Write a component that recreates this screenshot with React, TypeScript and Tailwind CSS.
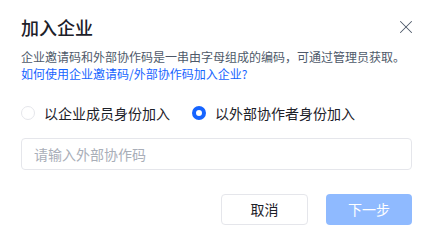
import { X } from 'lucide-react';

function Radio({ checked, label }: { checked?: boolean; label: string }) {
    return (
        <label className="flex items-center gap-[9px] cursor-pointer">
            {checked ? (
                <span className="w-[14px] h-[14px] rounded-full border-[4px] border-[#1664ff] bg-white" />
            ) : (
                <span className="w-[14px] h-[14px] rounded-full border border-[#e5e6eb] bg-white" />
            )}
            <span className="text-[14px] leading-[22px] text-[#1d2129]">{label}</span>
        </label>
    );
}

export default function App() {
    return (
        <div
            className="w-[437px] h-[237px] bg-white pl-[21px] pr-[25px] pt-[14px]"
            style={{ fontFamily: '"Noto Sans CJK SC", "Noto Sans", sans-serif' }}
        >
            <div className="flex items-center justify-between h-[26px]">
                <h2 className="text-[18px] leading-[26px] font-medium text-[#1d2129]">加入企业</h2>
                <button className="text-[#4e5969] -mr-[5px]">
                    <X size={22} strokeWidth={1.1} />
                </button>
            </div>
            <p className="mt-[8px] text-[12px] leading-[17px] text-[#4e5969] whitespace-nowrap">
                企业邀请码和外部协作码是一串由字母组成的编码，可通过管理员获取。
            </p>
            <a className="block text-[12px] leading-[17px] text-[#1664ff]">
                如何使用企业邀请码/外部协作码加入企业?
            </a>
            <div className="flex items-center gap-[22px] mt-[20px]">
                <Radio label="以企业成员身份加入" />
                <Radio checked label="以外部协作者身份加入" />
            </div>
            <input
                className="mt-[14px] w-full h-[32px] rounded-[4px] border border-[#e5e6eb] px-[12px] text-[14px] outline-none placeholder:text-[#a9aeb8]"
                placeholder="请输入外部协作码"
            />
            <div className="flex justify-end gap-[18px] mt-[24px]">
                <button className="w-[87px] h-[31px] rounded-[4px] border border-[#e5e6eb] bg-white text-[14px] text-[#1d2129]">
                    取消
                </button>
                <button className="w-[86px] h-[31px] rounded-[4px] bg-[#8fbaff] text-[14px] text-white">
                    下一步
                </button>
            </div>
        </div>
    );
}
